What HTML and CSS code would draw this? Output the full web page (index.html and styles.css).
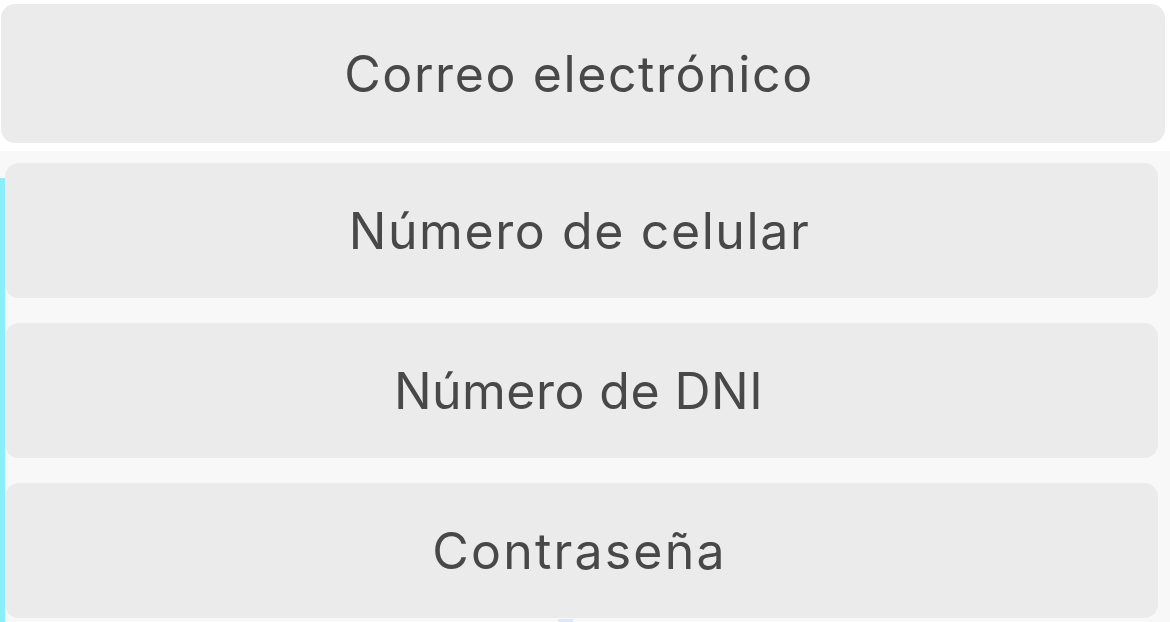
FILE: index.html
```html
<!DOCTYPE html>
<html lang="es">
<head>
<meta charset="utf-8">
<title>Formulario</title>
<link rel="stylesheet" href="styles.css">
</head>
<body>
<div class="top">
  <div class="field field-wide">Correo electrónico</div>
</div>
<div class="list">
  <div class="accent"></div>
  <div class="field">Número de celular</div>
  <div class="field field-dni">Número de DNI</div>
  <div class="field field-pass">Contraseña</div>
  <div class="peek"></div>
</div>
</body>
</html>
```

FILE: styles.css
```css
html, body {
  margin: 0;
  padding: 0;
}
body {
  width: 1170px;
  height: 622px;
  overflow: hidden;
  background: #f8f8f8;
  font-family: "Inter", "Lato", sans-serif;
  color: #484848;
}
.top {
  background: #ffffff;
  padding: 4px 5px 8px 1px;
}
.field {
  height: 135px;
  background: #ebebeb;
  border-radius: 14px;
  display: flex;
  align-items: center;
  justify-content: center;
  font-size: 50px;
  font-weight: 400;
  letter-spacing: 1.6px;
  padding-right: 4px;
  box-sizing: border-box;
}
.field-wide {
  height: 139px;
  padding-right: 8px;
}
.field-dni {
  letter-spacing: 0.45px;
  padding-right: 6px;
}
.field-pass {
  letter-spacing: 2.2px;
}
.list {
  position: relative;
  display: flex;
  flex-direction: column;
  gap: 25px;
  padding: 12px 12px 4px 5px;
}
.accent {
  position: absolute;
  left: 0;
  top: 27px;
  bottom: 0;
  width: 5px;
  background: #8aeefb;
}
.peek {
  position: absolute;
  left: 558px;
  top: 468px;
  width: 15px;
  height: 3px;
  background: #dbe8f8;
}
```
